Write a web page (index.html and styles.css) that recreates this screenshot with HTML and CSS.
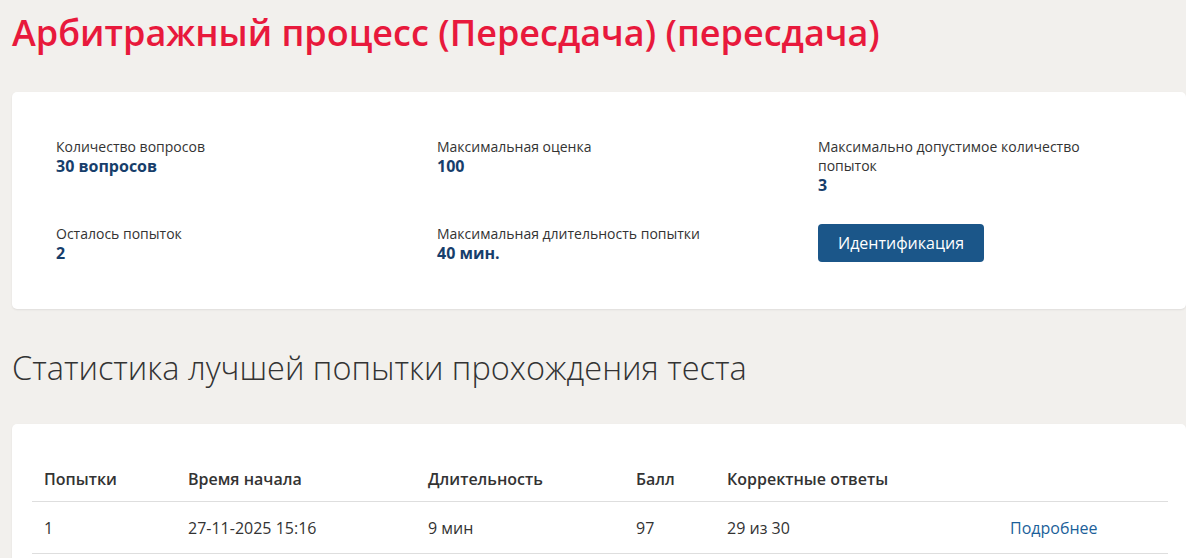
FILE: index.html
```html
<!DOCTYPE html>
<html lang="ru">
<head>
<meta charset="utf-8">
<link rel="stylesheet" href="styles.css">
</head>
<body>
<div class="page">
  <h1 class="title">Арбитражный процесс (Пересдача) (пересдача)</h1>
  <section class="card info-card">
    <div class="info-grid">
      <div class="info-item">
        <div class="label">Количество вопросов</div>
        <div class="value">30 вопросов</div>
      </div>
      <div class="info-item">
        <div class="label">Максимальная оценка</div>
        <div class="value">100</div>
      </div>
      <div class="info-item">
        <div class="label">Максимально допустимое количество<br>попыток</div>
        <div class="value">3</div>
      </div>
      <div class="info-item">
        <div class="label">Осталось попыток</div>
        <div class="value">2</div>
      </div>
      <div class="info-item">
        <div class="label">Максимальная длительность попытки</div>
        <div class="value">40 мин.</div>
      </div>
      <div class="info-item">
        <button class="btn">Идентификация</button>
      </div>
    </div>
  </section>
  <h2 class="subtitle">Статистика лучшей попытки прохождения теста</h2>
  <section class="card table-card">
    <table class="stats">
      <thead>
        <tr>
          <th class="c1">Попытки</th>
          <th class="c2">Время начала</th>
          <th class="c3">Длительность</th>
          <th class="c4">Балл</th>
          <th class="c5">Корректные ответы</th>
          <th class="c6"></th>
        </tr>
      </thead>
      <tbody>
        <tr>
          <td>1</td>
          <td>27-11-2025 15:16</td>
          <td>9 мин</td>
          <td>97</td>
          <td>29 из 30</td>
          <td><a class="link" href="#">Подробнее</a></td>
        </tr>
      </tbody>
    </table>
  </section>
</div>
</body>
</html>
```

FILE: styles.css
```css
html, body {
  margin: 0;
  padding: 0;
  background: #f2f0ed;
  font-family: "Open Sans", "Noto Sans", sans-serif;
  color: #333;
  overflow: hidden;
}

.page {
  padding: 0 0 0 12px;
}

.title {
  margin: 0;
  padding-top: 9px;
  font-size: 36px;
  line-height: 48px;
  font-weight: 600;
  color: #e8193c;
}

.card {
  background: #fff;
  border-radius: 5px;
  box-shadow: 0 1px 2px rgba(0,0,0,0.08);
}

.info-card {
  margin-top: 35px;
  height: 217px;
  box-sizing: border-box;
  padding: 45px 0 0 44px;
}

.info-grid {
  display: grid;
  grid-template-columns: 381px 381px 300px;
  row-gap: 29px;
}

.info-item {
  min-height: 36px;
}

.label {
  font-size: 14px;
  line-height: 19px;
  color: #333;
}

.value {
  font-size: 16px;
  line-height: 20px;
  font-weight: 700;
  color: #173e6b;
}

.btn {
  height: 38px;
  padding: 0 20px;
  border: 0;
  border-radius: 4px;
  background: #1b5689;
  color: #fff;
  font-family: "Open Sans", "Noto Sans", sans-serif;
  font-size: 16px;
  cursor: pointer;
}

.subtitle {
  margin: 0;
  padding-top: 38px;
  font-size: 32.5px;
  line-height: 42px;
  font-weight: 300;
  color: #333;
}

.table-card {
  margin-top: 35px;
  padding: 36px 18px 0 20px;
  height: 200px;
}

.stats {
  width: 100%;
  border-collapse: collapse;
  font-size: 16px;
}

.stats th {
  text-align: left;
  font-weight: 600;
  padding: 8px 12px 11px;
  border-bottom: 1px solid #dedede;
  color: #333;
}

.stats td {
  padding: 15px 12px 14px;
  border-bottom: 1px solid #dedede;
  color: #333;
}

.c1 { width: 120px; }
.c2 { width: 216px; }
.c3 { width: 184px; }
.c4 { width: 67px; }
.c5 { width: 259px; }

.link {
  color: #1b5f9a;
  text-decoration: none;
}
```
